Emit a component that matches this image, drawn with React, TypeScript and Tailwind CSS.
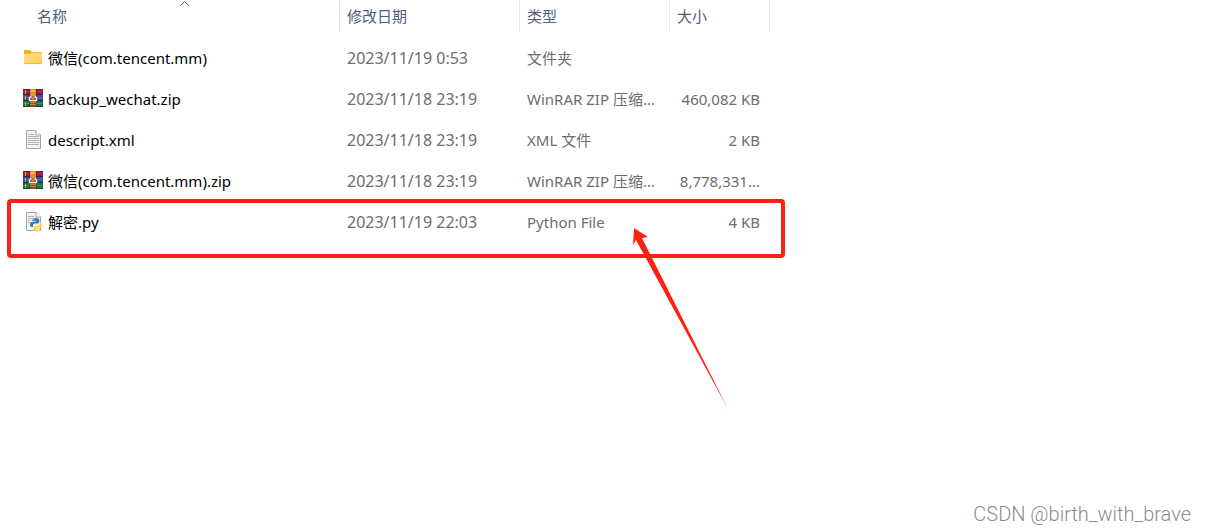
import type { ReactNode } from 'react';

type FileKind = 'folder' | 'archive' | 'text' | 'python';

interface FileRow {
  name: string;
  modified: string;
  type: string;
  size: string;
  kind: FileKind;
}

const files: FileRow[] = [
  { name: '微信(com.tencent.mm)', modified: '2023/11/19 0:53', type: '文件夹', size: '', kind: 'folder' },
  { name: 'backup_wechat.zip', modified: '2023/11/18 23:19', type: 'WinRAR ZIP 压缩...', size: '460,082 KB', kind: 'archive' },
  { name: 'descript.xml', modified: '2023/11/18 23:19', type: 'XML 文件', size: '2 KB', kind: 'text' },
  { name: '微信(com.tencent.mm).zip', modified: '2023/11/18 23:19', type: 'WinRAR ZIP 压缩...', size: '8,778,331...', kind: 'archive' },
  { name: '解密.py', modified: '2023/11/19 22:03', type: 'Python File', size: '4 KB', kind: 'python' },
];

function FolderIcon() {
  return (
    <svg width="20" height="20" viewBox="0 1 20 20" aria-hidden="true">
      <defs>
        <linearGradient id="folder" x1="0" y1="0" x2="1" y2="1">
          <stop offset="0" stopColor="#ffe596" />
          <stop offset="1" stopColor="#ffcb45" />
        </linearGradient>
      </defs>
      <path d="M1 4a1 1 0 0 1 1-1h5l2 2h9a1 1 0 0 1 1 1v4H1z" fill="#f3b21b" />
      <path d="M1 7h6l2-1h10v10a1 1 0 0 1-1 1H2a1 1 0 0 1-1-1z" fill="url(#folder)" />
      <path d="M1.500 16.600h17" stroke="#e9b840" strokeWidth=".8" />
    </svg>
  );
}

function ArchiveIcon() {
  return (
    <svg width="20" height="20" viewBox="0 1 20 20" aria-hidden="true">
      <path d="M0 1h20v6H0z" fill="#a3163c" />
      <path d="M0 1h20v1H0z" fill="#7b1733" />
      <path d="M1 3h18v1H1z" fill="#c52c54" />
      <path d="M0 7h20v6H0z" fill="#4a479c" />
      <path d="M0 6h20v1H0zM0 12h20v1H0z" fill="#2a2547" />
      <path d="M1 9h18v1H1z" fill="#6865c0" />
      <path d="M0 13h20v6H0z" fill="#12783f" />
      <path d="M1 15h18v1H1z" fill="#2ba35b" />
      <path d="M0 18h20v1H0z" fill="#114b31" />
      <path d="M2 2h1v4H2zM2 8h1v4H2zM2 14h1v4H2z" fill="#e0a82e" />
      <path d="M6 1h8v18H6z" fill="#292238" opacity=".45" />
      <path d="M7 1h6v6H7z" fill="#dc932e" />
      <path d="M8 2h4v2H8z" fill="#f7b548" />
      <path d="M7 13h6v6H7z" fill="#8d4a20" />
      <path d="M7 14h6v1H7zM7 16h6v1H7z" fill="#c58b3a" />
      <path d="M8.500 7.500L6.500 10v2.500h7V10l-2-2.500" fill="none" stroke="#f1ece6" strokeWidth="1.400" />
      <path d="M8 5h4v5.500l-2 1-2-1z" fill="#e9942f" />
      <path d="M9.500 8h1v2h-1z" fill="#8f4a1c" />
    </svg>
  );
}

function SheetOutline() {
  return (
    <>
      <path d="M3.500.5H13L17.500 5v13.500h-14z" fill="#f3f3f3" stroke="#a3a3a3" />
      <path d="M13 .5V5h4.500" fill="#fff" stroke="#a3a3a3" />
    </>
  );
}

function TextIcon() {
  return (
    <svg width="20" height="20" viewBox="0 0 20 20" aria-hidden="true">
      <SheetOutline />
      <path d="M5 4.500h6M5 6.500h11M5 8.500h11M5 10.500h11M5 12.500h11M5 14.500h11" stroke="#b0b0b0" />
    </svg>
  );
}

function PythonIcon() {
  return (
    <svg width="20" height="20" viewBox="0 0 20 20" aria-hidden="true">
      <SheetOutline />
      <path d="M5 4.500h6M5 6.500h5M5 8.500h2M5 10.500h2" stroke="#b0b0b0" />
      <path
        d="M12.200 6c-2 0-2.700.8-2.700 2v1.300h3.200v.6H8.800C7.500 9.900 7 11 7 12.400s.6 2.600 1.700 2.600H10v-1.600c0-1.200.9-2 2-2h2.600c1 0 1.700-.7 1.700-1.700V8c0-1.200-1.100-2-4.100-2z"
        fill="#3b79ae"
      />
      <path
        d="M14 19.500c2 0 2.700-.8 2.700-2v-1.300h-3.200v-.6h4c1.300 0 1.900-1 1.900-2.500s-.7-2.600-1.800-2.600h-.7v1.400c0 1.200-.9 2-2 2h-2.600c-1 0-1.700.7-1.700 1.700v1.900c0 1.200 1.100 2 3.400 2z"
        fill="#ffd648"
      />
      <circle cx="11" cy="7.600" r=".6" fill="#fff" />
      <circle cx="15.200" cy="17.900" r=".6" fill="#fff" />
    </svg>
  );
}

const icons: Record<FileKind, ReactNode> = {
  folder: <FolderIcon />,
  archive: <ArchiveIcon />,
  text: <TextIcon />,
  python: <PythonIcon />,
};

function SortArrow() {
  return (
    <svg className="absolute top-0 left-[179px]" width="11" height="7" viewBox="0 0 11 7" aria-hidden="true">
      <path d="M1 6l4.500-4.500L10 6" fill="none" stroke="#6b6b6b" />
    </svg>
  );
}

function FileTable() {
  return (
    <table className="w-[770px] table-fixed border-separate border-spacing-0 text-left text-[15px] leading-5 whitespace-nowrap">
      <colgroup>
        <col className="w-[340px]" />
        <col className="w-[180px]" />
        <col className="w-[150px]" />
        <col className="w-[100px]" />
      </colgroup>
      <thead>
        <tr className="h-8 text-[#4c607a] *:border-r *:border-[#e5e5e5] *:p-0 *:font-normal">
          <th scope="col" aria-sort="ascending">
            <span className="pl-[37px]">名称</span>
            <SortArrow />
          </th>
          <th scope="col"><span className="pl-[7px]">修改日期</span></th>
          <th scope="col"><span className="pl-[7px]">类型</span></th>
          <th scope="col"><span className="pl-[7px]">大小</span></th>
        </tr>
      </thead>
      <tbody className="text-[#6d6d6d] before:block before:h-[5px]">
        {files.map((file) => (
          <tr key={file.name} className="h-[41px]">
            <td className="p-0 pl-[23px] text-black">
              <div className="flex items-center gap-[5px]">
                {icons[file.kind]}
                <span>{file.name}</span>
              </div>
            </td>
            <td className="p-0 pl-[7px] text-base leading-5">{file.modified}</td>
            <td className="p-0 pl-[7px]">{file.type}</td>
            <td className="p-0 pr-[10px] text-right">{file.size}</td>
          </tr>
        ))}
      </tbody>
    </table>
  );
}

// Red box and arrow drawn over the last file
function Annotation() {
  return (
    <>
      <div className="pointer-events-none absolute top-[199px] left-[7px] h-[59px] w-[778px] rounded border-4 border-[#ff2012]" />
      <svg className="pointer-events-none absolute top-[227px] left-[632px]" width="98" height="184" viewBox="0 0 98 184" aria-hidden="true">
        <path d="M2 1L16 10L10 11L96 182L4 13L1 18Z" fill="#ff2012" />
      </svg>
    </>
  );
}

export default function App() {
  return (
    <main className="relative min-h-screen overflow-hidden bg-white font-['Noto_Sans','Noto_Sans_CJK_SC',sans-serif]">
      <FileTable />
      <Annotation />
      <p className="absolute right-[15px] bottom-1.5 font-['Roboto','Noto_Sans_CJK_SC',sans-serif] text-[20px] leading-6 font-light text-[#8c8c8c]">
        CSDN @birth_with_brave
      </p>
    </main>
  );
}
